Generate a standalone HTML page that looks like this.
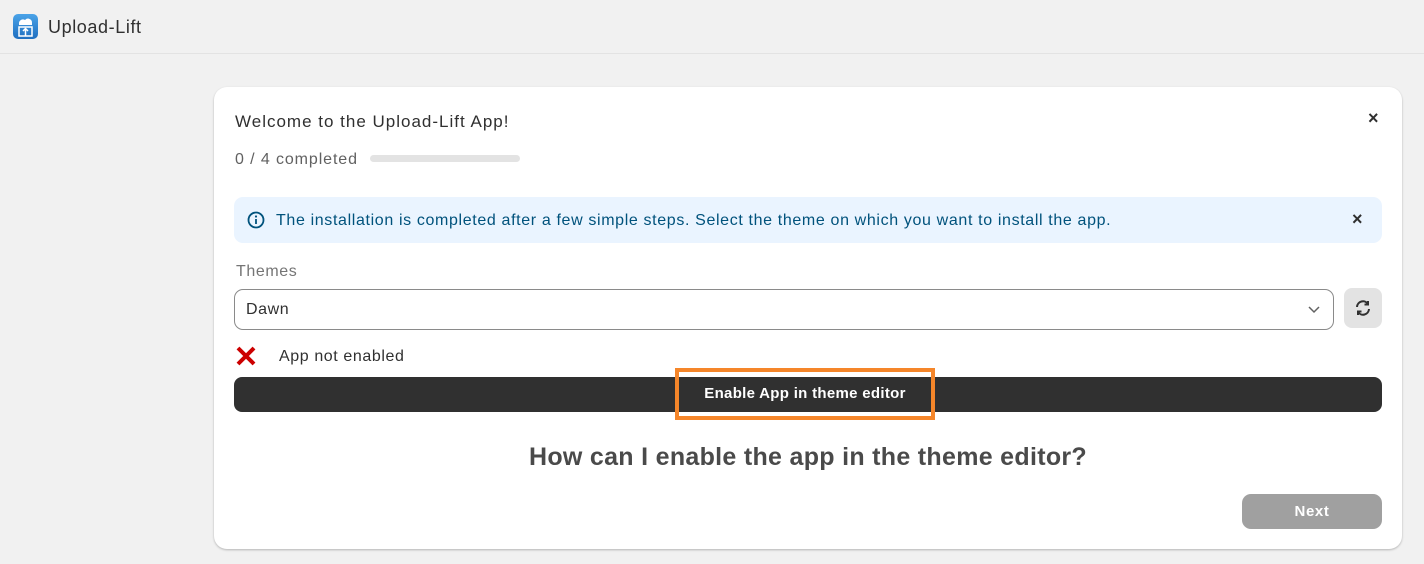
<!DOCTYPE html>
<html><head><style>
*{box-sizing:border-box;margin:0;padding:0}
body{width:1424px;height:564px;background:#f1f1f1;font-family:"Liberation Sans",sans-serif;position:relative;overflow:hidden;color:#303030;letter-spacing:0.6px}
.hdr{position:absolute;left:0;top:0;width:1424px;height:54px;border-bottom:1px solid #e3e3e3;background:#f1f1f1}
.logo{position:absolute;left:13px;top:14px;width:25px;height:25px;border-radius:5px;background:linear-gradient(#4aa3e8,#1f6fc0)}
.title{position:absolute;left:48px;top:17px;font-size:18px;color:#303030}
.card{position:absolute;left:214px;top:87px;width:1188px;height:462px;background:#fff;border-radius:13px;box-shadow:0 1px 2px rgba(0,0,0,.25)}
.abs{position:absolute}
</style></head><body>
<div class="hdr">
<div class="logo"><svg width="25" height="25" viewBox="0 0 25 25"><path d="M6 10a4 4 0 0 1 6-4 4 4 0 0 1 7 3v2H6z" fill="#fff"/><rect x="6" y="13" width="13" height="9" fill="none" stroke="#fff" stroke-width="1.5"/><path d="M12.5 22v-7M10 17l2.5-2.5L15 17" stroke="#fff" stroke-width="1.5" fill="none"/></svg></div>
<div class="title">Upload-Lift</div>
</div>
<div class="card">
<div class="abs" style="left:21px;top:25px;font-size:17px;color:#303030;letter-spacing:1px">Welcome to the Upload-Lift App!</div>
<div class="abs" style="left:1154px;top:21px;font-size:18px;font-weight:bold">×</div>
<div class="abs" style="left:21px;top:64px;font-size:16px;color:#616161;letter-spacing:0.9px">0 / 4 completed</div>
<div class="abs" style="left:156px;top:68px;width:150px;height:7px;border-radius:4px;background:#e3e3e3"></div>
<div class="abs" style="left:20px;top:110px;width:1148px;height:46px;border-radius:9px;background:#eaf4ff"></div>
<svg class="abs" style="left:33px;top:124px" width="18" height="18" viewBox="0 0 18 18"><circle cx="9" cy="9" r="7.5" fill="none" stroke="#00527c" stroke-width="1.8"/><circle cx="9" cy="5.5" r="1.1" fill="#00527c"/><path d="M9 8v5" stroke="#00527c" stroke-width="1.8"/></svg>
<div class="abs" style="left:62px;top:125px;font-size:16px;color:#00527c;letter-spacing:0.64px">The installation is completed after a few simple steps. Select the theme on which you want to install the app.</div>
<div class="abs" style="left:1138px;top:122px;font-size:18px;font-weight:bold;color:#303030">×</div>
<div class="abs" style="left:22px;top:176px;font-size:16px;color:#757575">Themes</div>
<div class="abs" style="left:20px;top:202px;width:1100px;height:41px;border:1px solid #8a8a8a;border-radius:9px"></div>
<div class="abs" style="left:32px;top:214px;font-size:16px">Dawn</div>
<svg class="abs" style="left:1093px;top:215px" width="14" height="14" viewBox="0 0 14 14"><path d="M2 5l5 5 5-5" stroke="#616161" stroke-width="1.5" fill="none"/></svg>
<div class="abs" style="left:1130px;top:201px;width:38px;height:40px;border-radius:8px;background:#e3e3e3"></div>
<svg class="abs" style="left:1139px;top:211px" width="20" height="20" viewBox="0 0 20 20"><path d="M4 9a6 6 0 0 1 11-3M16 11a6 6 0 0 1-11 3" stroke="#303030" stroke-width="2" fill="none"/><path d="M15 3v3.5h-3.5M5 17v-3.5h3.5" stroke="#303030" stroke-width="2" fill="none"/></svg>
<svg class="abs" style="left:21px;top:258px" width="22" height="22" viewBox="0 0 22 22"><path d="M3 3l16 16M19 3L3 19" stroke="#c00" stroke-width="4"/></svg>
<div class="abs" style="left:65px;top:261px;font-size:16px">App not enabled</div>
<div class="abs" style="left:20px;top:290px;width:1148px;height:35px;border-radius:8px;background:#303030"></div>
<div class="abs" style="left:461px;top:281px;width:260px;height:52px;border:4px solid #f5862a"></div>
<div class="abs" style="left:461px;top:298px;width:260px;text-align:center;font-size:15px;font-weight:bold;color:#fff;letter-spacing:0.3px">Enable App in theme editor</div>
<div class="abs" style="left:0;top:356px;width:1188px;text-align:center;font-size:25px;font-weight:bold;color:#4a4a4a;letter-spacing:0.3px">How can I enable the app in the theme editor?</div>
<div class="abs" style="left:1028px;top:407px;width:140px;height:35px;border-radius:9px;background:#a0a0a0;color:#fff;font-weight:bold;font-size:15px;text-align:center;line-height:35px">Next</div>
</div>
</body></html>
